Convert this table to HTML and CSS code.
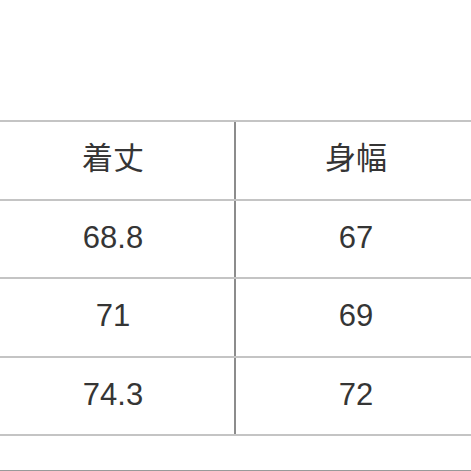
FILE: index.html
```html
<!DOCTYPE html>
<html lang="ja">
<head>
<meta charset="utf-8">
<title>サイズ表</title>
<link rel="stylesheet" href="styles.css">
</head>
<body>
<div class="page">
  <div class="table">
    <div class="row">
      <div class="cell first">着丈</div>
      <div class="cell">身幅</div>
    </div>
    <div class="row">
      <div class="cell first">68.8</div>
      <div class="cell">67</div>
    </div>
    <div class="row">
      <div class="cell first">71</div>
      <div class="cell">69</div>
    </div>
    <div class="row">
      <div class="cell first">74.3</div>
      <div class="cell">72</div>
    </div>
  </div>
  <div class="footer"></div>
</div>
</body>
</html>
```
FILE: styles.css
```css
html, body {
  margin: 0;
  padding: 0;
  background: #ffffff;
}
body {
  width: 471px;
  height: 471px;
  overflow: hidden;
}
.page {
  padding-top: 120px;
  font-family: "Liberation Sans", "Noto Sans CJK JP", Arial, sans-serif;
  color: #353535;
}
.table {
  margin-left: -8px;
  width: 488px;
  border-top: 2px solid #c4c4c4;
}
.row {
  display: grid;
  grid-template-columns: 244px 240px;
  height: 76.5px;
  border-bottom: 2px solid #c4c4c4;
}
.cell {
  display: flex;
  align-items: center;
  justify-content: center;
  font-size: 31px;
  line-height: 1;
  padding-bottom: 3px;
}
.cell.first {
  border-right: 2px solid #8c8c8c;
}
.footer {
  height: 34px;
  margin-left: -8px;
  width: 488px;
  border-bottom: 2px solid #9a9a9a;
}
```
